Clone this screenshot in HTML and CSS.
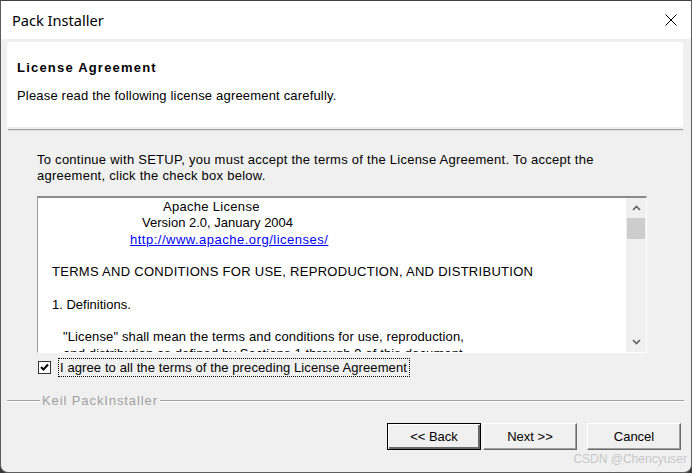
FILE: index.html
```html
<!DOCTYPE html>
<html>
<head>
<meta charset="utf-8">
<link rel="stylesheet" href="styles.css">
</head>
<body>
<div class="window">
  <div class="titlebar">
    <span class="title">Pack Installer</span>
    <svg class="close" width="12" height="12" viewBox="0 0 12 12"><path d="M0.5 0.5 L11.5 11.5 M11.5 0.5 L0.5 11.5" stroke="#000" stroke-width="1" fill="none"/></svg>
  </div>
  <div class="body">
    <div class="header">
      <div class="h-title">License Agreement</div>
      <div class="h-sub">Please read the following license agreement carefully.</div>
    </div>
    <div class="sep"></div>
    <div class="content">
      <p class="intro">To continue with SETUP, you must accept the terms of the License Agreement. To accept the<br>agreement, click the check box below.</p>
      <div class="license">
        <div class="license-text">
          <div class="ln l-apache">Apache License</div>
          <div class="ln l-version">Version 2.0, January 2004</div>
          <div class="ln l-link"><a href="#">http://www.apache.org/licenses/</a></div>
          <div class="ln">&nbsp;</div>
          <div class="ln l-terms">TERMS AND CONDITIONS FOR USE, REPRODUCTION, AND DISTRIBUTION</div>
          <div class="ln">&nbsp;</div>
          <div class="ln l-def">1. Definitions.</div>
          <div class="ln">&nbsp;</div>
          <div class="ln l-para">"License" shall mean the terms and conditions for use, reproduction,</div>
          <div class="ln l-para">and distribution as defined by Sections 1 through 9 of this document.</div>
        </div>
        <div class="scrollbar">
          <span class="arrow"><svg width="9" height="6" viewBox="0 0 9 6"><path d="M1 5 L4.5 1.5 L8 5" stroke="#606060" stroke-width="1.6" fill="none"/></svg></span>
          <span class="thumb"></span>
          <span class="track"></span>
          <span class="arrow"><svg width="9" height="6" viewBox="0 0 9 6"><path d="M1 1 L4.5 4.5 L8 1" stroke="#606060" stroke-width="1.6" fill="none"/></svg></span>
        </div>
      </div>
      <div class="agree">
        <span class="checkbox"><svg width="9" height="9" viewBox="0 0 9 9"><path d="M1 4 L3.5 6.5 L8 1.5" stroke="#000" stroke-width="2" fill="none"/></svg></span>
        <span class="focus">I agree to all the terms of the preceding License Agreement</span>
      </div>
    </div>
    <div class="group">
      <span class="gline short"></span>
      <span class="group-label">Keil PackInstaller</span>
      <span class="gline long"></span>
    </div>
    <div class="buttons">
      <button class="btn default">&lt;&lt; Back</button>
      <button class="btn">Next &gt;&gt;</button>
      <button class="btn cancel">Cancel</button>
    </div>
    <div class="watermark">CSDN @Chencyuser</div>
  </div>
</div>
</body>
</html>
```
FILE: styles.css
```css
html, body {
  margin: 0;
  padding: 0;
  background: #3a3a3a;
}
body {
  width: 692px;
  height: 473px;
  overflow: hidden;
  font-family: "Liberation Sans", Arial, sans-serif;
  font-size: 13px;
  color: #000;
}
.window {
  position: relative;
  width: 690px;
  height: 471px;
  border: 1px solid #5c5c5c;
  border-top-color: #404040;
  border-radius: 0 0 8px 8px;
  background: #f0f0f0;
  display: flex;
  flex-direction: column;
  overflow: hidden;
}
.titlebar {
  height: 38px;
  background: #fff;
  display: flex;
  align-items: center;
  justify-content: space-between;
  padding: 0 14px 0 11px;
  flex-shrink: 0;
}
.title {
  font-family: "Noto Sans", "Open Sans", sans-serif;
  font-size: 14.6px;
  color: #000;
}
.close {
  display: block;
}
.body {
  flex: 1;
  display: flex;
  flex-direction: column;
  padding-top: 3px;
}
.header {
  margin-left: 6px;
  width: 676px;
  height: 85px;
  background: #fff;
  box-sizing: border-box;
  padding: 18px 0 0 10px;
  line-height: 15px;
}
.h-title {
  font-weight: bold;
  letter-spacing: 1.2px;
}
.h-sub {
  margin-top: 13px;
  letter-spacing: 0.18px;
}
.sep {
  margin: 2px 0 0 7px;
  width: 675px;
  height: 1px;
  border-top: 1px solid #a0a0a0;
  background: #e0e0e0;
}
.content {
  padding-left: 36px;
}
.intro {
  margin: 21px 0 0 0;
  line-height: 16px;
  letter-spacing: 0.26px;
}
.license {
  margin-top: 12px;
  width: 610px;
  height: 157px;
  box-sizing: border-box;
  border-top: 2px solid #8a8a8a;
  border-left: 1px solid #9a9a9a;
  border-right: 1px solid #fff;
  border-bottom: 1px solid #fff;
  background: #fff;
  display: flex;
  overflow: hidden;
}
.license-text {
  flex: 1;
  padding-top: 1px;
  line-height: 16.3px;
  white-space: nowrap;
  overflow: hidden;
}
.ln {
  height: 16.3px;
}
.l-apache { padding-left: 125px; letter-spacing: 0.3px; }
.l-version { padding-left: 104px; }
.l-link { padding-left: 92px; }
.l-link a { color: #0000ff; text-decoration: underline; letter-spacing: 0.5px; }
.l-terms { padding-left: 14px; letter-spacing: 0.28px; }
.l-def { padding-left: 14px; }
.l-para { padding-left: 25px; letter-spacing: 0.13px; }
.scrollbar {
  width: 20px;
  background: #f0f0f0;
  display: flex;
  flex-direction: column;
  align-items: center;
}
.arrow {
  height: 20px;
  width: 100%;
  display: flex;
  align-items: center;
  justify-content: center;
}
.thumb {
  width: 18px;
  height: 21px;
  background: #cdcdcd;
}
.track {
  flex: 1;
}
.agree {
  margin-top: 5px;
  height: 19px;
  display: flex;
  align-items: center;
}
.checkbox {
  width: 11px;
  height: 11px;
  margin-left: 1px;
  background: #fff;
  border: 1px solid #333;
  display: flex;
  align-items: center;
  justify-content: center;
}
.focus {
  margin-left: 7px;
  height: 19px;
  line-height: 17px;
  padding: 0 1px 0 1px;
  border: 1px dotted #000;
  width: 352px;
  box-sizing: border-box;
  letter-spacing: 0.1px;
}
.group {
  margin-top: 16px;
  margin-left: 6px;
  width: 677px;
  height: 16px;
  display: flex;
  align-items: center;
}
.gline {
  height: 1px;
  border-top: 1px solid #a0a0a0;
  background: #fff;
}
.gline.short { width: 33px; }
.gline.long { flex: 1; }
.group-label {
  color: #a0a0a0;
  padding: 0 2px;
  line-height: 16px;
  letter-spacing: 0.9px;
}
.buttons {
  margin-top: 14px;
  display: flex;
  padding-left: 386px;
}
.btn {
  font-family: "Liberation Sans", Arial, sans-serif;
  font-size: 13px;
  color: #000;
  width: 94px;
  height: 27px;
  background: #f0f0f0;
  border: 1px solid;
  border-color: #fff #696969 #696969 #fff;
  box-shadow: inset -1px -1px 0 #a0a0a0;
  padding: 0;
  margin: 0 2px 0 0;
}
.btn.default {
  border: 1px solid #000;
  box-shadow: inset 1px 1px 0 #fff, inset -2px -2px 0 #696969;
}
.btn.cancel {
  margin-left: 8px;
}
.watermark {
  position: absolute;
  right: 4px;
  bottom: 6px;
  color: #c4c4c4;
  font-size: 12px;
  text-shadow: 0 0 1px #fff;
}
```
